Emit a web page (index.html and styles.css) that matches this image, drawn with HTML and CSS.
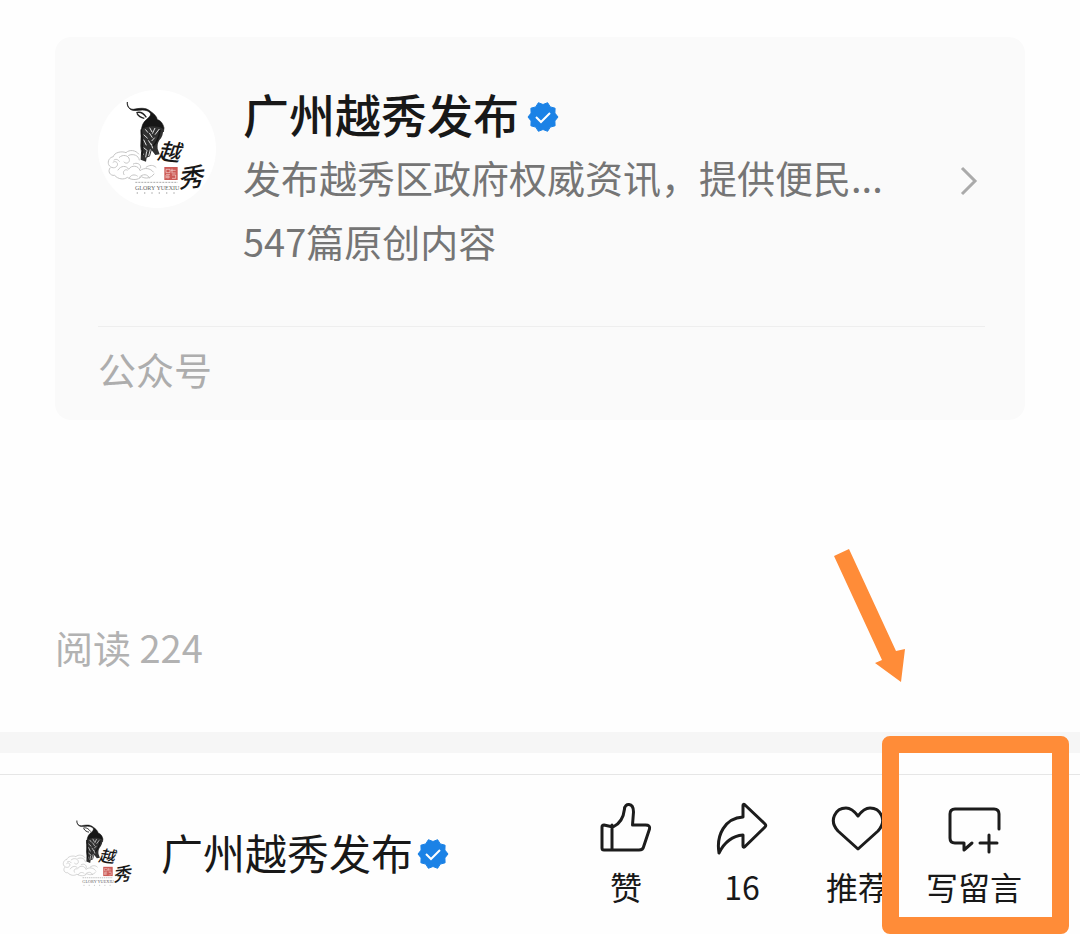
FILE: index.html
```
<!DOCTYPE html>
<html lang="zh-CN">
<head>
<meta charset="utf-8">
<meta name="viewport" content="width=device-width, initial-scale=1">
<title>广州越秀发布</title>
<link rel="stylesheet" href="styles.css">
</head>
<body>
<svg class="defs" aria-hidden="true">
  <symbol id="logo-art" viewBox="26 30 354 354">
    <g fill="none" stroke="#c4c4c4" stroke-width="3" stroke-linecap="round">
      <path d="M148 222c-8-12-28-14-38-4-14-6-36 0-38 12-12 2-18 14-14 24 6 12 22 12 26 2 3-9-7-15-13-9"/>
      <path d="M62 264c-8 10 0 24 14 22 10 12 28 14 38 6 14 10 34 8 42-2 14 8 30 4 38-8M90 232c10-10 28-6 30 6 2 10-10 16-16 8M118 226c14-6 30 0 32 14M86 270c8-14 26-14 32-2 8-14 30-12 34 4 12-10 32-8 40 4M104 284c-6-8 2-18 10-14M132 252c10-6 24 0 22 12M170 262c10-8 22-8 30 0M150 292c10-12 26-10 30 2M74 240c6-4 12-2 16 4M120 294c4-10 16-12 24-6"/>
    </g>
    <path fill="#161616" stroke="#161616" stroke-width="2" d="M114 66c0 14 6 22 18 22 18-3 36-7 50 5 13 9 20 16 22 26 10 2 17 12 20 25l-2 12c-6-8-14-12-22-11-14-1-26 2-34 6-6 4-9 8-10 12-1-20 4-34 13-42 9-8 17-14 14-21-4-7-14-10-24-10-14 1-24 3-32 0-9-4-15-13-13-24z"/>
    <path fill="none" stroke="#222" stroke-width="4" d="M141 98c12-4 22 2 30 14M143 100c5 9 12 13 22 15"/>
    <path fill="#303030" d="M155 150c14-14 47-14 66-4 2 14-3 26-11 35-5 8-6 16-5 26l6 16-13 2-11-14-5 18-10 4-2 12-16-6 1-22-2-20z"/>
    <path d="M168 148l8 10m5-15l7 13m9-12l-8 17m21-14l-13 17m-34 0l12 11m5-16l9 14m-26 6l8 17m6-15l9 14m-23 8l12 10m-18-2l5 14m24-34l4 14m6-32l-9 10M172 214l-3 18m14-24l-5 20" stroke="#dedede" stroke-width="3" fill="none"/>
    <path d="M156 148q4 40 3 78M212 150q-4 32-21 48" stroke="#151515" stroke-width="5" fill="none"/>
    <rect x="225" y="261" width="40" height="39" fill="#cc5a56"/>
    <path d="M230 268h12v10h-12zm18-2v14m-4-9h15m-10 8h10m-29 5h12m-6 0v12m-6-5h12m6-6h11v10h-11m-18-10v10" fill="none" stroke="#f6dad7" stroke-width="2"/>
    <path d="M138 307h127" stroke="#aaa" stroke-width="3" stroke-dasharray="6 3"/>
    <path d="M142 339h124" stroke="#bbb" stroke-width="4" stroke-dasharray="4 18"/>
  </symbol>
  <symbol id="verified" viewBox="0 0 32 32">
    <path fill="#1b82e6" stroke="#1b82e6" stroke-linejoin="round" d="M16 3.500L20.600 1.700 23.300 5.900 28.100 7.200 27.900 12.100 31 16 27.900 19.900 28.100 24.800 23.300 26.100 20.600 30.300 16 28.500 11.400 30.300 8.700 26.100 3.900 24.800 4.100 19.900 1 16 4.100 12.100 3.900 7.200 8.700 5.900 11.400 1.700z"/>
    <path fill="none" stroke="#fff" stroke-width="2" d="M9 16l5 5 9-9"/>
  </symbol>
</svg>

<main class="article-end">
  <a class="card" href="#account">
    <span class="card-main">
      <svg class="avatar" viewBox="26 30 354 354" role="img" aria-label="越秀">
        <use href="#logo-art" x="26" y="30" width="354" height="354"/>
        <text class="logo-brush" x="205" y="241" font-size="68" transform="rotate(6 240 216)">越</text>
        <text class="logo-brush" x="264" y="320" font-size="76" transform="rotate(-6 305 290)">秀</text>
        <text class="logo-latin" x="137" y="329" font-size="18">GLORY YUEXIU</text>
      </svg>
      <span class="card-text">
        <span class="card-title">广州越秀发布<svg class="badge" aria-hidden="true"><use href="#verified"/></svg></span>
        <span class="card-desc">发布越秀区政府权威资讯，提供便民...</span>
        <span class="card-count">547篇原创内容</span>
      </span>
      <svg class="chevron" viewBox="0 0 18 30" aria-hidden="true"><path d="M2 2l13 13L2 28"/></svg>
    </span>
    <span class="card-kind">公众号</span>
  </a>
  <p class="reads">阅读 224</p>
</main>

<div class="band"></div>

<footer class="bar">
  <a class="account" href="#account">
    <svg class="avatar-small" viewBox="26 30 354 354" role="img" aria-label="越秀">
      <use href="#logo-art" x="26" y="30" width="354" height="354"/>
      <text class="logo-brush" x="205" y="241" font-size="68" transform="rotate(6 240 216)">越</text>
      <text class="logo-brush" x="264" y="320" font-size="76" transform="rotate(-6 305 290)">秀</text>
      <text class="logo-latin" x="137" y="329" font-size="18">GLORY YUEXIU</text>
    </svg>
    <span class="account-name">广州越秀发布</span>
    <svg class="badge" aria-hidden="true"><use href="#verified"/></svg>
  </a>
  <div class="actions">
    <button class="action" type="button">
      <svg class="icon" viewBox="0 0 56 56" aria-hidden="true"><path d="M6 25q-2 0-2 2v21q0 2 2 2h35q4 0 4.500-3l6-18q1-4-4-4H34.500l1-13c0-10-9-9-9-3-1 9-5 15-11.500 18zM14 25v25"/></svg>
      <span>赞</span>
    </button>
    <button class="action" type="button">
      <svg class="icon" viewBox="0 0 56 56" aria-hidden="true"><path d="M29 17V5.500q0-2 2-.5l20 19q1.500 1.500 0 3L31 46.500q-2 1.500-2-.5V35C17 36 10 43 5 53 2 35 11 18 29 17z"/></svg>
      <span>16</span>
    </button>
    <button class="action" type="button">
      <svg class="icon" viewBox="0 0 56 56" aria-hidden="true"><path d="M28 49L8 31C-2 20 6 8 16 8q6 0 12 8 6-8 12-8c10 0 18 12 8 23z"/></svg>
      <span>推荐</span>
    </button>
    <button class="action action-comment" type="button">
      <svg class="icon" viewBox="0 0 56 56" aria-hidden="true"><path d="M53 29V14q0-5-5-5H9q-5 0-5 5v24q0 5 5 5h9v7l8-7M43 35v17M34 43h17"/></svg>
      <span>写留言</span>
      <svg class="arrow" viewBox="0 0 72 135" aria-hidden="true"><path d="M0 7L15 0 62 102 71 100 67 133 41 114 48 111z"/></svg>
    </button>
  </div>
</footer>
</body>
</html>
```
FILE: styles.css
```
* {
  box-sizing: border-box;
}

body {
  margin: 0;
  background: #fefefe;
  color: #181818;
  font-family: "Noto Sans CJK SC", sans-serif;
}

a {
  color: inherit;
  text-decoration: none;
}

.defs {
  position: absolute;
  width: 0;
  height: 0;
}

.logo-brush {
  font-family: "Noto Sans CJK SC", sans-serif;
  font-style: italic;
  font-weight: 500;
  fill: #181818;
}

.logo-latin {
  font-family: "Liberation Serif", serif;
  fill: #666;
}

.article-end {
  padding: 37px 55px 53px;
}

.card {
  display: block;
  padding: 44px 40px 23px 43px;
  border-radius: 16px;
  background: #fafafa;
}

.card-main {
  display: flex;
  align-items: center;
  padding-bottom: 53px;
  border-bottom: 1px solid #eee;
}

.avatar {
  flex: none;
  align-self: flex-start;
  width: 118px;
  height: 118px;
  margin-top: 9px;
  border-radius: 50%;
  background: #fff;
}

.card-text {
  flex: 1;
  min-width: 0;
  margin-left: 27px;
  line-height: 64px;
  white-space: nowrap;
}

.card-title,
.card-desc,
.card-count {
  display: block;
}

.card-title {
  display: flex;
  align-items: center;
  gap: 8px;
  font-size: 46px;
  font-weight: 500;
}

.badge {
  flex: none;
  width: 32px;
  height: 32px;
}

.card-title .badge {
  margin-top: 8px;
}

.card-desc,
.card-count {
  color: #757575;
  font-size: 38px;
}

.chevron {
  flex: none;
  width: 18px;
  height: 30px;
  margin-top: 8px;
  margin-right: 7px;
  fill: none;
  stroke: #aaa;
  stroke-width: 3;
}

.card-kind {
  display: block;
  padding-top: 14px;
  color: #adadad;
  font-size: 38px;
  line-height: 56px;
}

.reads {
  margin: 195px 0 0;
  color: #b2b2b2;
  font-size: 38px;
  line-height: 64px;
}

.band {
  height: 21px;
  margin-bottom: 21px;
  background: #f6f6f6;
}

.bar {
  display: flex;
  align-items: flex-start;
  justify-content: space-between;
  padding: 25px 48px 24px 56px;
  border-top: 1px solid #e6e6e6;
}

.account {
  display: flex;
  align-items: center;
  margin-top: 12px;
}

.avatar-small {
  flex: none;
  width: 84px;
  height: 84px;
}

.account-name {
  margin: 0 4px 4px 21px;
  font-size: 42px;
  line-height: 64px;
  white-space: nowrap;
}

.actions {
  display: flex;
}

.action {
  position: relative;
  display: flex;
  flex-direction: column;
  align-items: center;
  gap: 6px;
  width: 116px;
  padding: 0;
  border: 0;
  background: none;
  color: inherit;
  font: 32px/48px "Noto Sans CJK SC", sans-serif;
  white-space: nowrap;
}

.icon {
  width: 56px;
  height: 56px;
  fill: none;
  stroke: #1c1c1c;
  stroke-width: 3;
  stroke-linecap: round;
  stroke-linejoin: round;
}

/* Highlight frame and pointer over the comment button */
.action-comment::after {
  content: "";
  position: absolute;
  top: -64px;
  right: -37px;
  bottom: -24px;
  left: -34px;
  border: 17px solid #ff8c38;
  border-radius: 8px;
}

.arrow {
  position: absolute;
  top: -251px;
  left: -82px;
  width: 72px;
  height: 135px;
  fill: #ff8c38;
}
```
